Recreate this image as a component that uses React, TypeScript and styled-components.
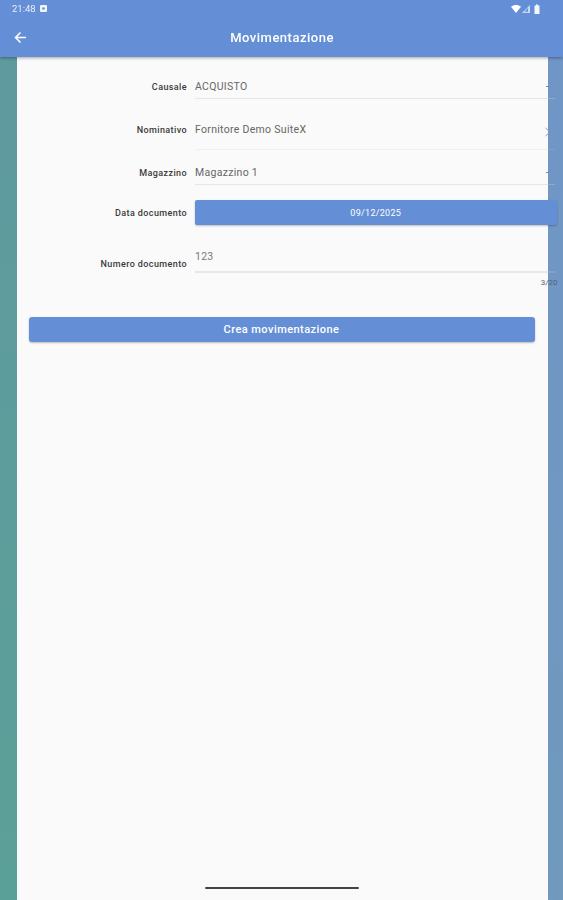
import { createGlobalStyle } from 'styled-components';
import styled from 'styled-components';

const GlobalStyle = createGlobalStyle`
  html, body {
    margin: 0;
    padding: 0;
    height: 900px;
    overflow: hidden;
    background: #fafafa;
    font-family: Roboto, "Liberation Sans", sans-serif;
  }
`;

const Page = styled.div`
  width: 563px;
  height: 900px;
  display: flex;
  flex-direction: column;
  overflow: hidden;
  position: relative;
  filter: blur(0.4px);
`;

const Header = styled.header`
  height: 57px;
  flex: none;
  background: #648fd6;
  box-shadow: 0 1px 3px rgba(0, 0, 0, 0.35);
  color: #fff;
  position: relative;
  z-index: 2;
  display: flex;
  flex-direction: column;
`;

const StatusBar = styled.div`
  height: 17px;
  padding: 0 22px 0 12px;
  display: flex;
  align-items: center;
  justify-content: space-between;
  font-size: 9.5px;
  color: #e8effa;
`;

const StatusLeft = styled.div`
  display: flex;
  align-items: center;
  gap: 4px;
`;

const StatusRight = styled.div`
  display: flex;
  align-items: center;
  gap: 1px;
`;

const Toolbar = styled.div`
  flex: 1;
  display: flex;
  align-items: center;
  padding: 1px 14px 0 14px;
`;

const BackButton = styled.div`
  width: 13px;
  height: 13px;
  display: flex;
`;

const Title = styled.div`
  flex: 1;
  text-align: center;
  font-size: 13px;
  font-weight: 500;
  letter-spacing: 0.5px;
  padding-right: 12px;
`;

const Body = styled.div`
  flex: 1;
  display: flex;
  min-height: 0;
`;

const Rail = styled.div<{ $side: 'left' | 'right' }>`
  flex: none;
  width: ${(p) => (p.$side === 'left' ? '16.5px' : '15px')};
  background: ${(p) =>
    p.$side === 'left'
      ? 'linear-gradient(180deg, #5f9a9f 0%, #5ba098 100%)'
      : 'linear-gradient(180deg, #7096c6 0%, #7099bd 100%)'};
`;

const Card = styled.main`
  flex: 1;
  min-width: 0;
  background: #fafafa;
  padding-top: 7px;
`;

const Form = styled.div`
  width: 540px;
  position: relative;
  z-index: 1;
`;

const Row = styled.div<{ $height: number }>`
  height: ${(p) => p.$height}px;
  display: flex;
  align-items: flex-start;
`;

const Label = styled.div<{ $top: number }>`
  width: 170.5px;
  flex: none;
  text-align: right;
  font-size: 9px;
  line-height: 12px;
  font-weight: 500;
  letter-spacing: 0.4px;
  color: #3a3a3a;
  padding-top: ${(p) => p.$top}px;
`;

const Control = styled.div`
  flex: 1;
  margin-left: 8px;
  min-width: 0;
  position: relative;
`;

const SelectBox = styled.div<{ $height: number; $faint?: boolean }>`
  height: ${(p) => p.$height}px;
  box-sizing: border-box;
  padding-top: 16px;
  border-bottom: 1px solid rgba(200, 200, 200, ${(p) => (p.$faint ? 0.2 : 0.4)});
  margin-right: 2px;
  font-size: 10.5px;
  line-height: 14px;
  letter-spacing: 0.3px;
  color: #666;
`;

const Caret = styled.span`
  position: absolute;
  left: 351px;
  top: 22px;
  width: 3px;
  height: 1px;
  background: #6f86b8;
`;

const Chevron = styled.svg`
  position: absolute;
  left: 350px;
  top: 20px;
  width: 6px;
  height: 10px;
`;

const DateButton = styled.div`
  height: 25px;
  background: #648fd6;
  border-radius: 2px;
  box-shadow: 0 1px 2px rgba(0, 0, 0, 0.25);
  color: #fff;
  font-size: 9px;
  letter-spacing: 0.3px;
  display: flex;
  align-items: center;
  justify-content: center;
`;

const NumberField = styled.div`
  height: 37px;
  box-sizing: border-box;
  padding-top: 14px;
  border-bottom: 2px solid rgba(190, 190, 190, 0.3);
  margin-right: 2px;
  font-size: 10.5px;
  line-height: 14px;
  letter-spacing: 0.25px;
  color: #777;
`;

const Counter = styled.div`
  text-align: right;
  font-size: 8px;
  line-height: 10px;
  color: #58626f;
  margin: 5px -1px 0 0;
`;

const SubmitRow = styled.div`
  padding: 0 13px 0 12px;
  width: 531px;
  box-sizing: border-box;
`;

const SubmitButton = styled.button`
  width: 100%;
  height: 25px;
  border: none;
  border-radius: 3px;
  background: #648fd6;
  box-shadow: 0 1px 2px rgba(0, 0, 0, 0.25);
  color: #fff;
  font-family: inherit;
  font-size: 11px;
  font-weight: 500;
  letter-spacing: 0.45px;
  padding: 0;
`;

const HomeBar = styled.div`
  position: absolute;
  left: 205px;
  bottom: 11px;
  width: 154px;
  height: 2px;
  border-radius: 1px;
  background: #444;
`;

const App = () => {
  return (
    <>
      <GlobalStyle />
      <Page>
        <Header>
          <StatusBar>
            <StatusLeft>
              <span>21:48</span>
              <svg width="7" height="7" viewBox="0 0 7 7">
                <rect width="7" height="7" rx="1" fill="#f0f4fb" />
                <circle cx="3.5" cy="3.5" r="1.3" fill="#648fd6" />
              </svg>
            </StatusLeft>
            <StatusRight>
              <svg width="10" height="8" viewBox="0 0 10 8">
                <path d="M0 1.8C2.8-.6 7.2-.6 10 1.8L5 8Z" fill="#fff" />
              </svg>
              <svg width="8" height="8" viewBox="0 0 8 8">
                <path d="M8 0V8H0Z" fill="#c9d8f0" />
                <path d="M6 3V6.8H2.6Z" fill="#648fd6" />
              </svg>
              <svg width="8" height="10" viewBox="0 0 8 10" style={{ marginLeft: 2 }}>
                <path d="M1.5 1.5H3V.5H5V1.5H6.5V10H1.5Z" fill="#f4f7fc" />
              </svg>
            </StatusRight>
          </StatusBar>
          <Toolbar>
            <BackButton>
              <svg width="13" height="13" viewBox="0 0 13 13" fill="none" stroke="#fff" strokeWidth="1.5">
                <path d="M12 6.5H2M6.5 1.5 1.5 6.5l5 5" />
              </svg>
            </BackButton>
            <Title>Movimentazione</Title>
          </Toolbar>
        </Header>
        <Body>
          <Rail $side="left" />
          <Card>
            <Form>
              <Row $height={43}>
                <Label $top={17}>Causale</Label>
                <Control>
                  <SelectBox $height={35}>ACQUISTO</SelectBox>
                  <Caret />
                </Control>
              </Row>
              <Row $height={43}>
                <Label $top={17}>Nominativo</Label>
                <Control>
                  <SelectBox $height={43} $faint>Fornitore Demo SuiteX</SelectBox>
                  <Chevron viewBox="0 0 6 10" fill="none" stroke="#8b97ad" strokeWidth="1">
                    <path d="M.5 1 5 5 .5 9" />
                  </Chevron>
                </Control>
              </Row>
              <Row $height={50}>
                <Label $top={17}>Magazzino</Label>
                <Control>
                  <SelectBox $height={35}>Magazzino 1</SelectBox>
                  <Caret />
                </Control>
              </Row>
              <Row $height={36}>
                <Label $top={7}>Data documento</Label>
                <Control>
                  <DateButton>09/12/2025</DateButton>
                </Control>
              </Row>
              <Row $height={81}>
                <Label $top={22}>Numero documento</Label>
                <Control>
                  <NumberField>123</NumberField>
                  <Counter>3/20</Counter>
                </Control>
              </Row>
            </Form>
            <SubmitRow>
              <SubmitButton>Crea movimentazione</SubmitButton>
            </SubmitRow>
          </Card>
          <Rail $side="right" />
        </Body>
        <HomeBar />
      </Page>
    </>
  );
};

export default App;
